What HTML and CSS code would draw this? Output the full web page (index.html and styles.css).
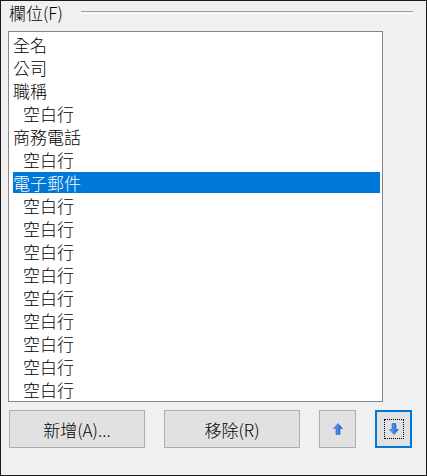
FILE: index.html
```html
<!DOCTYPE html>
<html lang="zh-Hant">
<head>
<meta charset="utf-8">
<title>欄位</title>
<link rel="stylesheet" href="styles.css">
</head>
<body>
<div class="window">
  <div class="group-head">
    <span class="group-label">欄位(F)</span>
    <span class="group-line"></span>
  </div>
  <div class="listbox">
    <div class="row">全名</div>
    <div class="row">公司</div>
    <div class="row">職稱</div>
    <div class="row sub">空白行</div>
    <div class="row">商務電話</div>
    <div class="row sub">空白行</div>
    <div class="row sel">電子郵件</div>
    <div class="row sub">空白行</div>
    <div class="row sub">空白行</div>
    <div class="row sub">空白行</div>
    <div class="row sub">空白行</div>
    <div class="row sub">空白行</div>
    <div class="row sub">空白行</div>
    <div class="row sub">空白行</div>
    <div class="row sub">空白行</div>
    <div class="row sub">空白行</div>
  </div>
  <div class="buttons">
    <button class="btn wide">新增(A)...</button>
    <button class="btn wide">移除(R)</button>
    <button class="btn icon">
      <svg width="10" height="12" viewBox="0 0 10 12">
        <defs>
          <linearGradient id="gu" x1="0" y1="0" x2="1" y2="0">
            <stop offset="0" stop-color="#7db4f5"/>
            <stop offset="0.5" stop-color="#3f86e8"/>
            <stop offset="1" stop-color="#1d57c4"/>
          </linearGradient>
        </defs>
        <path d="M5 0.5 L9.5 5.5 L7 5.5 L7 11.5 L3 11.5 L3 5.5 L0.5 5.5 Z" fill="url(#gu)" stroke="#2a5fb8" stroke-width="0.6" stroke-linejoin="round"/>
      </svg>
    </button>
    <button class="btn icon focus">
      <span class="focus-rect">
        <svg width="10" height="12" viewBox="0 0 10 12">
          <defs>
            <linearGradient id="gd" x1="0" y1="0" x2="1" y2="0">
              <stop offset="0" stop-color="#7db4f5"/>
              <stop offset="0.5" stop-color="#3f86e8"/>
              <stop offset="1" stop-color="#1d57c4"/>
            </linearGradient>
          </defs>
          <path d="M5 11.5 L9.5 6.5 L7 6.5 L7 0.5 L3 0.5 L3 6.5 L0.5 6.5 Z" fill="url(#gd)" stroke="#2a5fb8" stroke-width="0.6" stroke-linejoin="round"/>
        </svg>
      </span>
    </button>
  </div>
</div>
</body>
</html>
```

FILE: styles.css
```css
html, body {
  margin: 0;
  padding: 0;
  background: #f0f0f0;
}

.window {
  width: 427px;
  height: 476px;
  box-sizing: border-box;
  border: 1px solid #1b1b1b;
  background: #f0f0f0;
  font-family: "Noto Sans CJK TC", "Noto Sans", "Liberation Sans", sans-serif;
  font-size: 17px;
  font-weight: 300;
  color: #000;
  display: flex;
  flex-direction: column;
}

.group-head {
  display: flex;
  align-items: center;
  height: 22px;
  padding: 1px 13px 0 8px;
}

.group-label {
  line-height: 22px;
  color: #000;
}

.group-line {
  flex: 1;
  margin-left: 18px;
  height: 1px;
  border-top: 1px solid #a0a0a0;
  border-bottom: 1px solid #ffffff;
  margin-top: -1px;
}

.listbox {
  margin: 7px 0 0 7px;
  width: 375px;
  height: 371px;
  box-sizing: border-box;
  border: 1px solid #828790;
  background: #fff;
  padding: 1px;
  overflow: hidden;
}

.row {
  height: 23px;
  line-height: 23px;
  padding-left: 3px;
  white-space: nowrap;
}

.row.sub {
  padding-left: 13px;
}

.row.sel {
  margin-left: 1px;
  margin-right: 1px;
  padding-left: 2px;
  background: #0078d7;
  background-clip: content-box;
  color: #fff;
  height: 21px;
  line-height: 21px;
  padding-top: 1px;
  padding-bottom: 1px;
}

.buttons {
  display: flex;
  gap: 19px;
  margin: 8px 0 0 8px;
}

.btn {
  height: 38px;
  box-sizing: border-box;
  border: 1px solid #adadad;
  background: #e1e1e1;
  font-family: "Noto Sans CJK TC", "Noto Sans", "Liberation Sans", sans-serif;
  font-size: 17px;
  font-weight: 300;
  color: #000;
  padding: 0;
  margin: 0;
  display: flex;
  align-items: center;
  justify-content: center;
}

.btn.wide {
  width: 136px;
}

.btn.icon {
  width: 37px;
}

.btn.focus {
  border: 2px solid #0078d7;
}

.focus-rect {
  width: 20px;
  height: 20px;
  box-sizing: border-box;
  border: 1px dotted #000;
  display: flex;
  align-items: center;
  justify-content: center;
}

.btn svg {
  display: block;
}
```
